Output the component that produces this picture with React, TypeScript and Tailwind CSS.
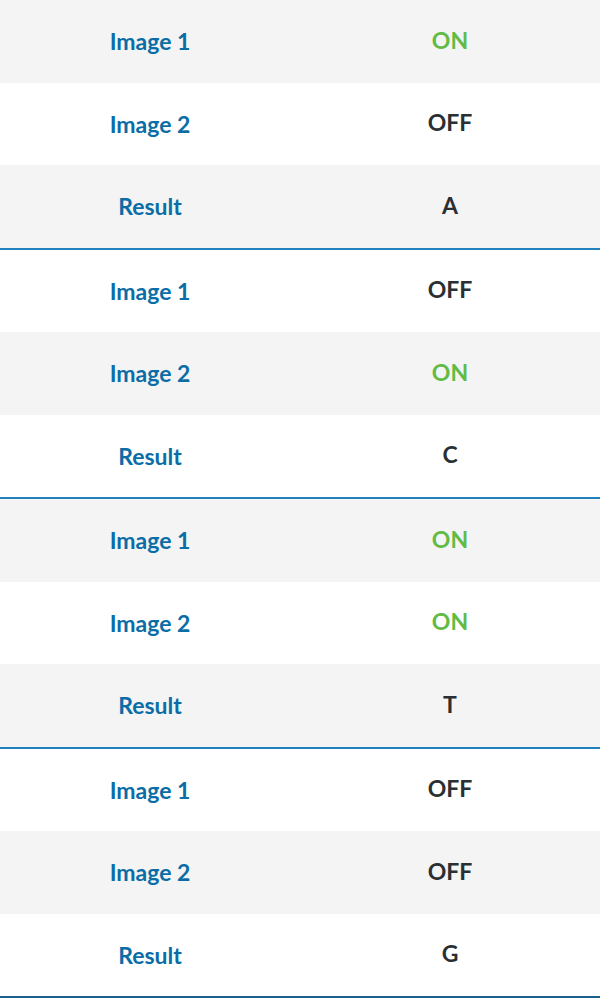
const groups = [
  { img1: "ON", img2: "OFF", result: "A" },
  { img1: "OFF", img2: "ON", result: "C" },
  { img1: "ON", img2: "ON", result: "T" },
  { img1: "OFF", img2: "OFF", result: "G" },
];

function Value({ v }: { v: string }) {
  const cls =
    v === "ON" ? "text-[#62bb46]" : "text-[#2a2f33]";
  return <span className={`pb-[3px] ${cls}`}>{v}</span>;
}

export default function App() {
  let idx = 0;
  return (
    <div
      className="w-[600px] bg-white font-bold text-[23px]"
      style={{ fontFamily: "Lato, 'Liberation Sans', sans-serif" }}
    >
      {groups.map((g, gi) => {
        const rows = [
          ["Image 1", g.img1],
          ["Image 2", g.img2],
          ["Result", g.result],
        ];
        return (
          <div
            key={gi}
            className={
              gi === groups.length - 1
                ? "border-b-2 border-[#1b5f8c]"
                : "border-b-2 border-[#2181bd]"
            }
          >
            {rows.map(([label, val]) => {
              const gray = idx++ % 2 === 0;
              return (
                <div
                  key={label}
                  className={`grid h-[82.5px] grid-cols-2 items-center text-center ${
                    gray ? "bg-[#f4f4f4]" : "bg-white"
                  }`}
                >
                  <span className="text-[#0b6da6]">{label}</span>
                  <Value v={val} />
                </div>
              );
            })}
          </div>
        );
      })}
    </div>
  );
}
